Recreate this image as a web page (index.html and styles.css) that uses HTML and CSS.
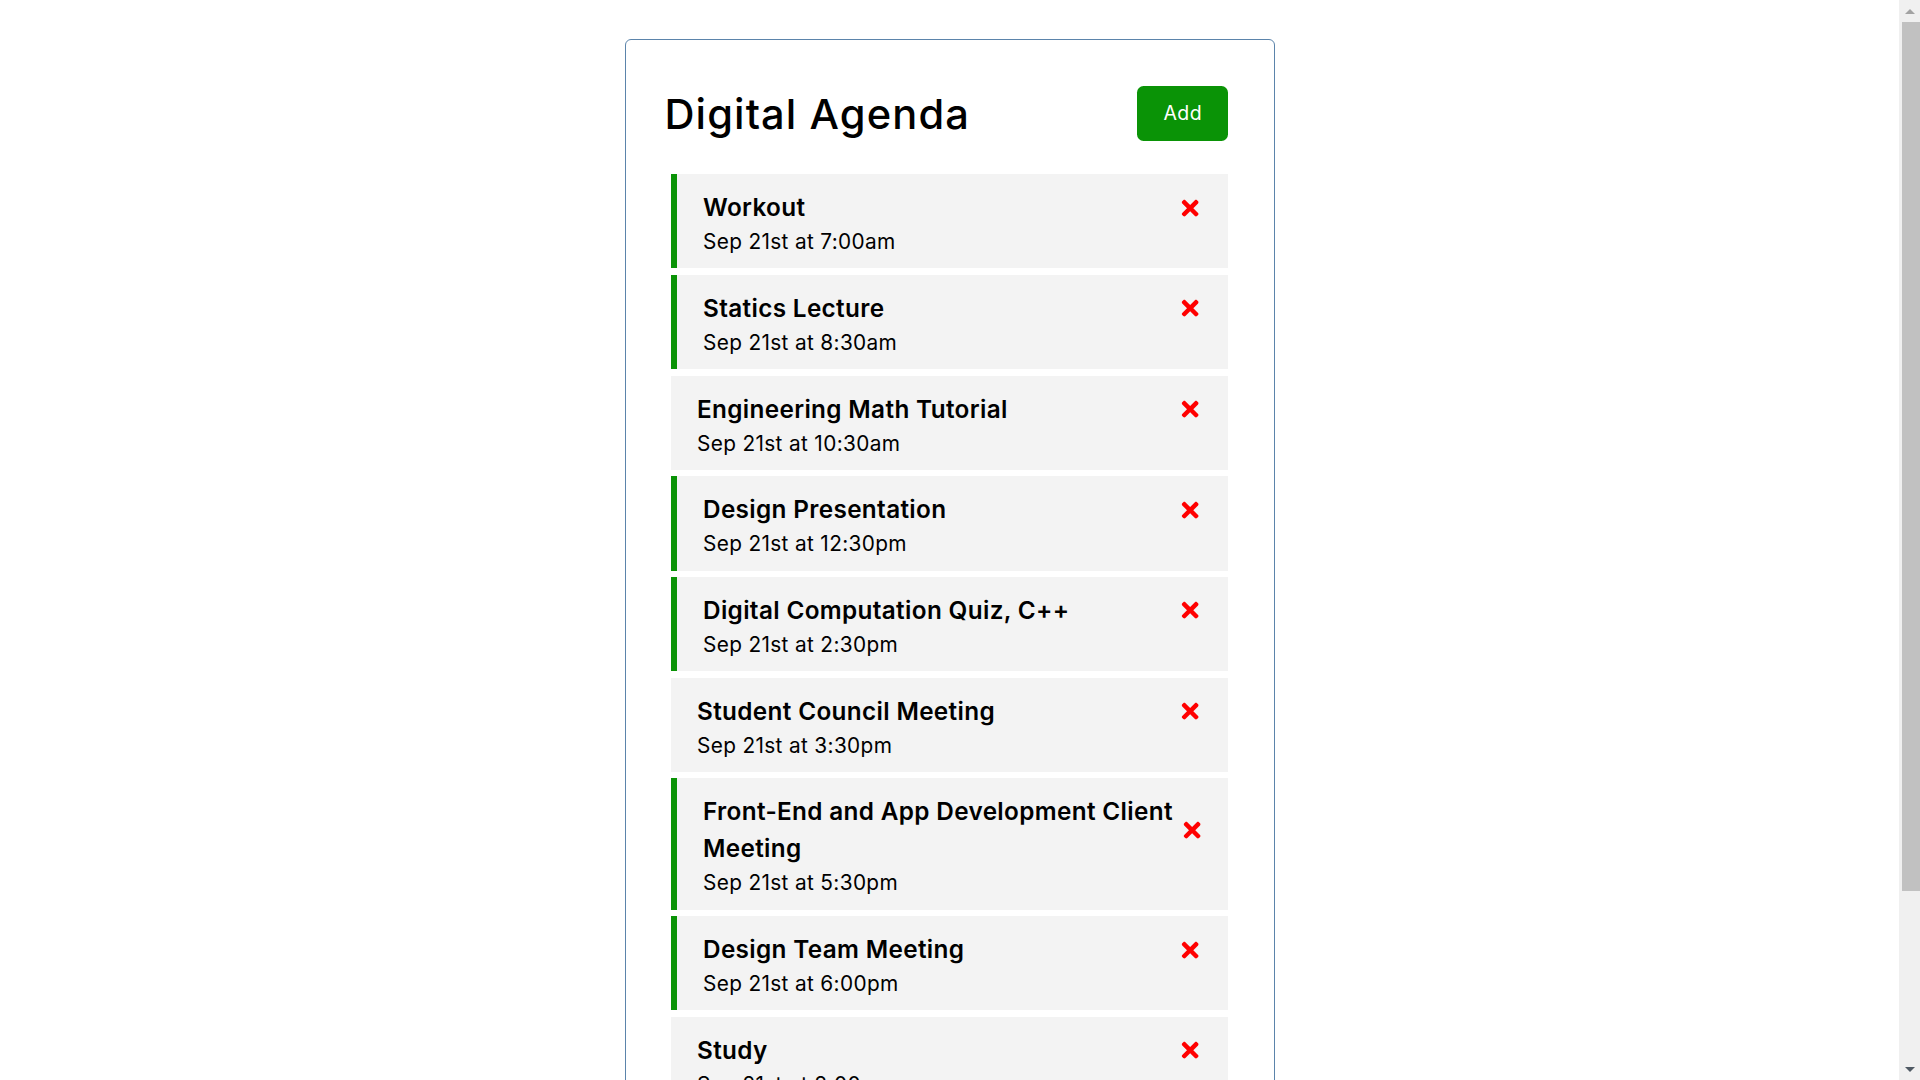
FILE: index.html
```html
<!DOCTYPE html>
<html lang="en">
<head>
<meta charset="utf-8">
<title>Digital Agenda</title>
<link rel="stylesheet" href="styles.css">
</head>
<body>
<div class="container">
  <header class="header">
    <h1>Digital Agenda</h1>
    <button class="btn">Add</button>
  </header>
  <div class="tasks">
    <div class="task reminder">
      <h3>Workout <svg class="del" viewBox="0 0 352 512"><path d="M242.72 256l100.07-100.07c12.28-12.28 12.28-32.19 0-44.48l-22.24-22.24c-12.28-12.28-32.19-12.28-44.48 0L176 189.28 75.93 89.21c-12.28-12.28-32.19-12.28-44.48 0L9.21 111.45c-12.28 12.28-12.28 32.19 0 44.48L109.28 256 9.21 356.07c-12.28 12.28-12.28 32.19 0 44.48l22.24 22.24c12.28 12.28 32.2 12.28 44.48 0L176 322.72l100.07 100.07c12.28 12.28 32.2 12.28 44.48 0l22.24-22.24c12.28-12.28 12.28-32.19 0-44.48L242.72 256z"/></svg></h3>
      <p>Sep 21st at 7:00am</p>
    </div>
    <div class="task reminder">
      <h3>Statics Lecture <svg class="del" viewBox="0 0 352 512"><path d="M242.72 256l100.07-100.07c12.28-12.28 12.28-32.19 0-44.48l-22.24-22.24c-12.28-12.28-32.19-12.28-44.48 0L176 189.28 75.93 89.21c-12.28-12.28-32.19-12.28-44.48 0L9.21 111.45c-12.28 12.28-12.28 32.19 0 44.48L109.28 256 9.21 356.07c-12.28 12.28-12.28 32.19 0 44.48l22.24 22.24c12.28 12.28 32.2 12.28 44.48 0L176 322.72l100.07 100.07c12.28 12.28 32.2 12.28 44.48 0l22.24-22.24c12.28-12.28 12.28-32.19 0-44.48L242.72 256z"/></svg></h3>
      <p>Sep 21st at 8:30am</p>
    </div>
    <div class="task">
      <h3>Engineering Math Tutorial <svg class="del" viewBox="0 0 352 512"><path d="M242.72 256l100.07-100.07c12.28-12.28 12.28-32.19 0-44.48l-22.24-22.24c-12.28-12.28-32.19-12.28-44.48 0L176 189.28 75.93 89.21c-12.28-12.28-32.19-12.28-44.48 0L9.21 111.45c-12.28 12.28-12.28 32.19 0 44.48L109.28 256 9.21 356.07c-12.28 12.28-12.28 32.19 0 44.48l22.24 22.24c12.28 12.28 32.2 12.28 44.48 0L176 322.72l100.07 100.07c12.28 12.28 32.2 12.28 44.48 0l22.24-22.24c12.28-12.28 12.28-32.19 0-44.48L242.72 256z"/></svg></h3>
      <p>Sep 21st at 10:30am</p>
    </div>
    <div class="task reminder">
      <h3>Design Presentation <svg class="del" viewBox="0 0 352 512"><path d="M242.72 256l100.07-100.07c12.28-12.28 12.28-32.19 0-44.48l-22.24-22.24c-12.28-12.28-32.19-12.28-44.48 0L176 189.28 75.93 89.21c-12.28-12.28-32.19-12.28-44.48 0L9.21 111.45c-12.28 12.28-12.28 32.19 0 44.48L109.28 256 9.21 356.07c-12.28 12.28-12.28 32.19 0 44.48l22.24 22.24c12.28 12.28 32.2 12.28 44.48 0L176 322.72l100.07 100.07c12.28 12.28 32.2 12.28 44.48 0l22.24-22.24c12.28-12.28 12.28-32.19 0-44.48L242.72 256z"/></svg></h3>
      <p>Sep 21st at 12:30pm</p>
    </div>
    <div class="task reminder">
      <h3>Digital Computation Quiz, C++ <svg class="del" viewBox="0 0 352 512"><path d="M242.72 256l100.07-100.07c12.28-12.28 12.28-32.19 0-44.48l-22.24-22.24c-12.28-12.28-32.19-12.28-44.48 0L176 189.28 75.93 89.21c-12.28-12.28-32.19-12.28-44.48 0L9.21 111.45c-12.28 12.28-12.28 32.19 0 44.48L109.28 256 9.21 356.07c-12.28 12.28-12.28 32.19 0 44.48l22.24 22.24c12.28 12.28 32.2 12.28 44.48 0L176 322.72l100.07 100.07c12.28 12.28 32.2 12.28 44.48 0l22.24-22.24c12.28-12.28 12.28-32.19 0-44.48L242.72 256z"/></svg></h3>
      <p>Sep 21st at 2:30pm</p>
    </div>
    <div class="task">
      <h3>Student Council Meeting <svg class="del" viewBox="0 0 352 512"><path d="M242.72 256l100.07-100.07c12.28-12.28 12.28-32.19 0-44.48l-22.24-22.24c-12.28-12.28-32.19-12.28-44.48 0L176 189.28 75.93 89.21c-12.28-12.28-32.19-12.28-44.48 0L9.21 111.45c-12.28 12.28-12.28 32.19 0 44.48L109.28 256 9.21 356.07c-12.28 12.28-12.28 32.19 0 44.48l22.24 22.24c12.28 12.28 32.2 12.28 44.48 0L176 322.72l100.07 100.07c12.28 12.28 32.2 12.28 44.48 0l22.24-22.24c12.28-12.28 12.28-32.19 0-44.48L242.72 256z"/></svg></h3>
      <p>Sep 21st at 3:30pm</p>
    </div>
    <div class="task reminder">
      <h3>Front-End and App Development Client Meeting <svg class="del" viewBox="0 0 352 512"><path d="M242.72 256l100.07-100.07c12.28-12.28 12.28-32.19 0-44.48l-22.24-22.24c-12.28-12.28-32.19-12.28-44.48 0L176 189.28 75.93 89.21c-12.28-12.28-32.19-12.28-44.48 0L9.21 111.45c-12.28 12.28-12.28 32.19 0 44.48L109.28 256 9.21 356.07c-12.28 12.28-12.28 32.19 0 44.48l22.24 22.24c12.28 12.28 32.2 12.28 44.48 0L176 322.72l100.07 100.07c12.28 12.28 32.2 12.28 44.48 0l22.24-22.24c12.28-12.28 12.28-32.19 0-44.48L242.72 256z"/></svg></h3>
      <p>Sep 21st at 5:30pm</p>
    </div>
    <div class="task reminder">
      <h3>Design Team Meeting <svg class="del" viewBox="0 0 352 512"><path d="M242.72 256l100.07-100.07c12.28-12.28 12.28-32.19 0-44.48l-22.24-22.24c-12.28-12.28-32.19-12.28-44.48 0L176 189.28 75.93 89.21c-12.28-12.28-32.19-12.28-44.48 0L9.21 111.45c-12.28 12.28-12.28 32.19 0 44.48L109.28 256 9.21 356.07c-12.28 12.28-12.28 32.19 0 44.48l22.24 22.24c12.28 12.28 32.2 12.28 44.48 0L176 322.72l100.07 100.07c12.28 12.28 32.2 12.28 44.48 0l22.24-22.24c12.28-12.28 12.28-32.19 0-44.48L242.72 256z"/></svg></h3>
      <p>Sep 21st at 6:00pm</p>
    </div>
    <div class="task">
      <h3>Study <svg class="del" viewBox="0 0 352 512"><path d="M242.72 256l100.07-100.07c12.28-12.28 12.28-32.19 0-44.48l-22.24-22.24c-12.28-12.28-32.19-12.28-44.48 0L176 189.28 75.93 89.21c-12.28-12.28-32.19-12.28-44.48 0L9.21 111.45c-12.28 12.28-12.28 32.19 0 44.48L109.28 256 9.21 356.07c-12.28 12.28-12.28 32.19 0 44.48l22.24 22.24c12.28 12.28 32.2 12.28 44.48 0L176 322.72l100.07 100.07c12.28 12.28 32.2 12.28 44.48 0l22.24-22.24c12.28-12.28 12.28-32.19 0-44.48L242.72 256z"/></svg></h3>
      <p>Sep 21st at 8:00pm</p>
    </div>
  </div>
  <footer class="footer">
    <p>Copyright &copy; 2021</p>
    <a href="#about">About</a>
  </footer>
</div>
<div class="scrollbar" aria-hidden="true">
  <span class="sb-arrow sb-up"></span>
  <span class="sb-thumb"></span>
  <span class="sb-arrow sb-down"></span>
</div>
</body>
</html>
```

FILE: styles.css
```css
* {
  box-sizing: border-box;
  margin: 0;
  padding: 0;
}

html {
  scrollbar-width: none;
}

body {
  font-family: Inter, "Open Sans", "Liberation Sans", sans-serif;
  line-height: 1.5;
  color: #000;
  background: #fff;
  padding-right: 21px;
}

.container {
  max-width: 650px;
  margin: 39px auto;
  min-height: 390px;
  border: 1px solid #5b84ab;
  border-radius: 6px;
  padding: 39px;
  overflow: auto;
}

.header {
  display: flex;
  justify-content: space-between;
  align-items: center;
  margin-bottom: 27px;
}

.header h1 {
  font-size: 41.6px;
  font-weight: 500;
  line-height: 1.5;
  letter-spacing: 1.1px;
  padding-top: 2px;
}

.btn {
  display: inline-block;
  background: #0a9306;
  color: #fff;
  border: none;
  padding: 13px 26px;
  margin: 6.5px;
  border-radius: 6.5px;
  font-family: inherit;
  font-size: 19.5px;
  line-height: 1.5;
  letter-spacing: 0.4px;
  cursor: pointer;
}

.task {
  background: #f3f3f3;
  margin: 6.5px;
  padding: 15px 26px 11px;
  cursor: pointer;
}

.task.reminder {
  border-left: 6.5px solid #0a9306;
}

.task h3 {
  display: flex;
  align-items: center;
  justify-content: space-between;
  font-size: 24.3px;
  font-weight: 600;
  line-height: 37px;
  letter-spacing: 0.35px;
}

.task p {
  font-size: 20.8px;
  font-weight: 400;
  line-height: 31.2px;
  letter-spacing: 0.35px;
}

.del {
  width: 1em;
  height: 1em;
  fill: #f00;
  cursor: pointer;
  flex: 0 1 auto;
}

.footer {
  margin-top: 39px;
  text-align: center;
  font-size: 20.8px;
}

.footer a {
  color: #333;
}

.scrollbar {
  position: fixed;
  top: 0;
  right: 0;
  width: 21px;
  height: 100vh;
  background: #f0f0f0;
  display: flex;
  flex-direction: column;
  align-items: center;
}

.sb-arrow {
  width: 0;
  height: 0;
  border-left: 5px solid transparent;
  border-right: 5px solid transparent;
}

.sb-up {
  margin-top: 9px;
  border-bottom: 5px solid #a3a3a3;
}

.sb-thumb {
  margin-top: 8px;
  margin-left: 2px;
  width: 18px;
  height: 869px;
  background: #c1c1c1;
}

.sb-down {
  margin-top: auto;
  margin-bottom: 8px;
  border-top: 5px solid #505a64;
}
```
